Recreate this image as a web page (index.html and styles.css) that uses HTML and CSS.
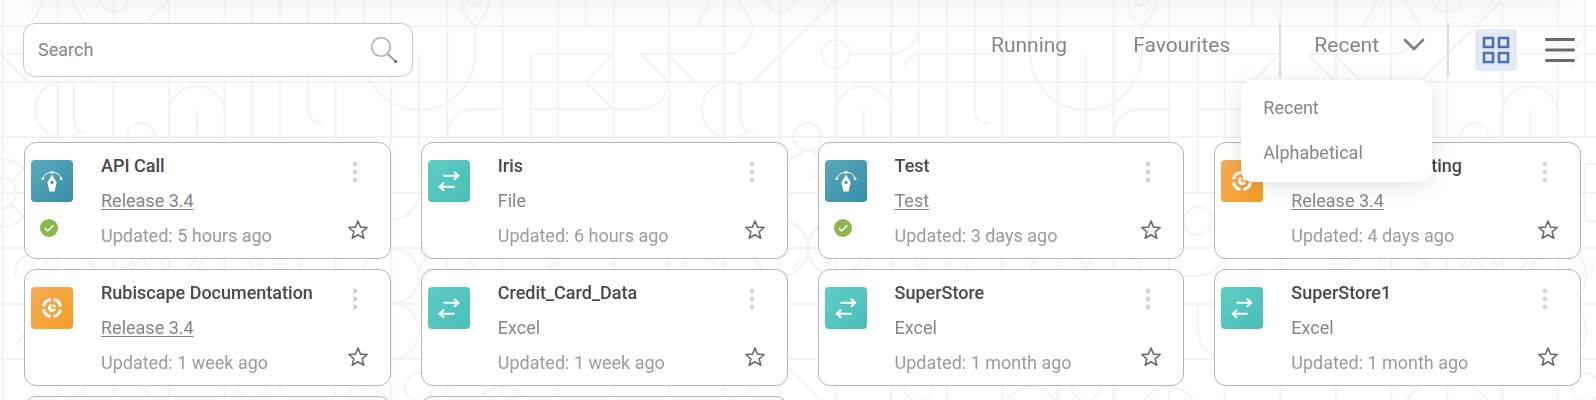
FILE: index.html
```html
<!DOCTYPE html>
<html lang="en">

<head>
    <title>Rubiscape</title>
    <meta charset="utf-8">
    <meta name="viewport" content="width=device-width, initial-scale=1.0">
    <link rel="stylesheet" href="styles.css">
</head>

<body>
    <svg class="backdrop" aria-hidden="true">
        <defs>
            <pattern id="lines" width="666.7" height="445" patternUnits="userSpaceOnUse">
                <g fill="none" stroke="#f3f3f3" stroke-width="2">
                    <path d="M0 26H667M0 82H667M0 137H667M0 193H667M0 248H667M0 304H667M0 359H667" />
                    <path d="M2.500 0V445M58 0V445M113.500 0V445M169 0V445M224.500 0V445M280 0V445M335.500 0V445M391 0V445M447 0V445M502.500 0V445M558 0V445M613.500 0V445" />
                    <path d="M252 0V137M308 0V109Q308 123 323 123M419 54V193M586 0V26M531 54V193" />
                    <path d="M44 0L30 26M72 0L86 26A28 28 0 0 1 58 54H0L28 82M641 54H667M641 54L669 82M86 82L169 0" />
                    <circle cx="113.500" cy="-2" r="14" />
                    <circle cx="169" cy="54" r="14" />
                    <path d="M183 54H225A28 28 0 0 0 252 26M238 68A14 14 0 0 1 252 54H335" />
                    <path d="M80 132A28 28 0 1 1 74 84V120Q75 132 86 132M169 109A28 28 0 0 1 224 109M197 109V137" />
                    <circle cx="141" cy="137" r="14" />
                    <path d="M363.500 0V54A55.600 55.600 0 0 0 475 54V26Q461 14 461 0M475 26Q489 14 489 0" />
                    <circle cx="475" cy="-2" r="7" />
                    <path d="M447 137Q449 109 475 109H502M613 54H531M531 109H641A27 27 0 0 0 668 82M613 54L586 82L613 109" />
                    <circle cx="0" cy="193" r="34" />
                    <circle cx="0" cy="193" r="16" />
                    <path d="M11 182L24 169M11 204L24 217M16 276A16 16 0 0 1 48 266M16 346L28 328M88 258L95 268M134 258L127 268M158 258L165 268M196 258L188 268M259 262V268M301 262V268" />
                    <path d="M419 193A28 28 0 0 1 391 220" />
                    <circle cx="391" cy="276" r="28" />
                    <circle cx="391" cy="331" r="28" />
                    <circle cx="419" cy="387" r="14" />
                    <circle cx="252" cy="387" r="14" />
                    <circle cx="113.500" cy="248" r="28" />
                    <circle cx="169" cy="248" r="28" />
                    <circle cx="225" cy="276" r="28" />
                    <circle cx="225" cy="331" r="28" />
                    <circle cx="531" cy="221" r="14" />
                    <circle cx="447" cy="276" r="28" />
                    <circle cx="364" cy="415" r="28" />
                    <circle cx="502" cy="415" r="28" />
                    <path d="M121 161L141 150L160 160M141 180L160 169M252 164H280M252 221H280M252 164V221M121 367L165 411M86 387L58 415M531 304V330Q532 352 558 359M502 276H531A28 28 0 0 0 558 248" />
                </g>
            </pattern>
            <linearGradient id="blue" x2="1" y2="1">
                <stop offset="0" stop-color="#5aa9bb" />
                <stop offset="1" stop-color="#378da9" />
            </linearGradient>
            <linearGradient id="teal" x2="1" y2="1">
                <stop offset="0" stop-color="#5fcdc6" />
                <stop offset="1" stop-color="#49beb7" />
            </linearGradient>
            <linearGradient id="orange" x2="1" y2="1">
                <stop offset="0" stop-color="#f3ac58" />
                <stop offset="1" stop-color="#f59d22" />
            </linearGradient>
            <symbol id="pen" viewBox="0 0 42 42">
                <rect width="42" height="42" rx="4" fill="url(#blue)" />
                <path d="M12 18.500Q13.500 12.500 21 12.300Q28.500 12.500 30 18.500" fill="none" stroke="#fff" stroke-width="1" />
                <circle cx="11.800" cy="18.800" r="1.300" fill="#fff" />
                <circle cx="30.200" cy="18.800" r="1.300" fill="#fff" />
                <path d="M19.700 11h2.600v2.600h-2.600z" fill="#fff" />
                <path d="M21 14.500L25.600 22.500L23.600 31.500H18.400L16.400 22.500Z" fill="#fff" />
                <circle cx="21" cy="22.400" r="1.700" fill="#4599b0" />
            </symbol>
            <symbol id="swap" viewBox="0 0 42 42">
                <rect width="42" height="42" rx="4" fill="url(#teal)" />
                <path d="M15.500 15.700H30M26 11.700L30.300 15.700L26 19.700M26.500 26.700H12M16 22.700L11.700 26.700L16 30.700" fill="none" stroke="#fff" stroke-width="2" />
            </symbol>
            <symbol id="wheel" viewBox="0 0 42 42">
                <rect width="42" height="42" rx="4" fill="url(#orange)" />
                <circle cx="21" cy="21" r="8.600" fill="none" stroke="#fff" stroke-width="3" stroke-dasharray="10.500 3" stroke-dashoffset="-1.500" />
                <path d="M20.300 17V21.700H25A4 4 0 1 1 20.300 17Z" fill="#fff" />
                <path d="M21.800 17A3.600 3.600 0 0 1 25 20.200H21.800Z" fill="#fff" />
            </symbol>
            <symbol id="check" viewBox="0 0 18 18">
                <circle cx="9" cy="9" r="9" fill="#8db74e" />
                <path d="M4.800 9.200L7.800 12L13.300 6.300" fill="none" stroke="#fff" stroke-width="1.500" />
            </symbol>
            <symbol id="dots" viewBox="0 0 6 22">
                <g fill="#d6d6d6">
                    <circle cx="3" cy="3" r="2.400" />
                    <circle cx="3" cy="11" r="2.400" />
                    <circle cx="3" cy="19" r="2.400" />
                </g>
            </symbol>
            <symbol id="star" viewBox="0 0 22 22">
                <path d="M11 2L13.500 8.100L20.200 8.500L15.100 12.800L16.800 19.300L11 15.700L5.200 19.300L6.900 12.800L1.800 8.500L8.500 8.100Z" fill="none" stroke="#6d6e72" stroke-width="1.600" stroke-linejoin="round" />
            </symbol>
        </defs>
        <rect width="100%" height="100%" fill="url(#lines)" />
    </svg>
    <div class="top-shadow"></div>

    <header class="toolbar">
        <form class="search">
            <input type="text" placeholder="Search" aria-label="Search">
            <button aria-label="Submit search">
                <svg width="28" height="28" viewBox="0 0 28 28">
                    <circle cx="11" cy="11" r="9.300" fill="none" stroke="#b5b5b5" stroke-width="1.800" />
                    <path d="M17.500 17.700L25 25" stroke="#a0a0a0" stroke-width="1.800" />
                    <circle cx="25.600" cy="25.600" r="1.700" fill="#6d6e72" />
                </svg>
            </button>
        </form>
        <nav class="filters">
            <a href="#running">Running</a>
            <a href="#favourites">Favourites</a>
        </nav>
        <div class="sort">
            <button class="sort-button" aria-expanded="true">Recent
                <svg width="22" height="14" viewBox="0 0 22 14">
                    <path d="M2 2L11 11L20 2" fill="none" stroke="#808186" stroke-width="2.800" stroke-linecap="round" />
                </svg>
            </button>
            <div class="sort-menu">
                <button>Recent</button>
                <button>Alphabetical</button>
            </div>
        </div>
        <div class="views">
            <button class="view selected" aria-label="Grid view">
                <svg width="28" height="28" viewBox="0 0 28 28">
                    <path d="M2 2H11V11H2ZM17 2H26V11H17ZM2 17H11V26H2ZM17 17H26V26H17Z" fill="none" stroke="#4a6fb8" stroke-width="2.600" />
                </svg>
            </button>
            <button class="view" aria-label="List view">
                <svg width="30" height="26" viewBox="0 0 30 26">
                    <path d="M1.500 2.500H28.500M1.500 13H28.500M1.500 23.500H28.500" stroke="#6a6b70" stroke-width="3" stroke-linecap="round" />
                </svg>
            </button>
        </div>
    </header>

    <main class="cards">
        <article class="card">
            <div class="kind"><svg class="icon"><use href="#pen" /></svg><svg class="status"><use href="#check" /></svg></div>
            <div class="info">
                <h2>API Call</h2>
                <a href="#release">Release 3.4</a>
                <p>Updated: 5 hours ago</p>
            </div>
            <div class="actions">
                <button class="more" aria-label="More"><svg width="6" height="22"><use href="#dots" /></svg></button>
                <button class="fav" aria-label="Favourite"><svg width="22" height="22"><use href="#star" /></svg></button>
            </div>
        </article>
        <article class="card">
            <div class="kind"><svg class="icon"><use href="#swap" /></svg></div>
            <div class="info">
                <h2>Iris</h2>
                <span>File</span>
                <p>Updated: 6 hours ago</p>
            </div>
            <div class="actions">
                <button class="more" aria-label="More"><svg width="6" height="22"><use href="#dots" /></svg></button>
                <button class="fav" aria-label="Favourite"><svg width="22" height="22"><use href="#star" /></svg></button>
            </div>
        </article>
        <article class="card">
            <div class="kind"><svg class="icon"><use href="#pen" /></svg><svg class="status"><use href="#check" /></svg></div>
            <div class="info">
                <h2>Test</h2>
                <a href="#test">Test</a>
                <p>Updated: 3 days ago</p>
            </div>
            <div class="actions">
                <button class="more" aria-label="More"><svg width="6" height="22"><use href="#dots" /></svg></button>
                <button class="fav" aria-label="Favourite"><svg width="22" height="22"><use href="#star" /></svg></button>
            </div>
        </article>
        <article class="card">
            <div class="kind"><svg class="icon"><use href="#wheel" /></svg></div>
            <div class="info">
                <h2>Rubiscape Budgeting</h2>
                <a href="#release">Release 3.4</a>
                <p>Updated: 4 days ago</p>
            </div>
            <div class="actions">
                <button class="more" aria-label="More"><svg width="6" height="22"><use href="#dots" /></svg></button>
                <button class="fav" aria-label="Favourite"><svg width="22" height="22"><use href="#star" /></svg></button>
            </div>
        </article>
        <article class="card">
            <div class="kind"><svg class="icon"><use href="#wheel" /></svg></div>
            <div class="info">
                <h2>Rubiscape Documentation</h2>
                <a href="#release">Release 3.4</a>
                <p>Updated: 1 week ago</p>
            </div>
            <div class="actions">
                <button class="more" aria-label="More"><svg width="6" height="22"><use href="#dots" /></svg></button>
                <button class="fav" aria-label="Favourite"><svg width="22" height="22"><use href="#star" /></svg></button>
            </div>
        </article>
        <article class="card">
            <div class="kind"><svg class="icon"><use href="#swap" /></svg></div>
            <div class="info">
                <h2>Credit_Card_Data</h2>
                <span>Excel</span>
                <p>Updated: 1 week ago</p>
            </div>
            <div class="actions">
                <button class="more" aria-label="More"><svg width="6" height="22"><use href="#dots" /></svg></button>
                <button class="fav" aria-label="Favourite"><svg width="22" height="22"><use href="#star" /></svg></button>
            </div>
        </article>
        <article class="card">
            <div class="kind"><svg class="icon"><use href="#swap" /></svg></div>
            <div class="info">
                <h2>SuperStore</h2>
                <span>Excel</span>
                <p>Updated: 1 month ago</p>
            </div>
            <div class="actions">
                <button class="more" aria-label="More"><svg width="6" height="22"><use href="#dots" /></svg></button>
                <button class="fav" aria-label="Favourite"><svg width="22" height="22"><use href="#star" /></svg></button>
            </div>
        </article>
        <article class="card">
            <div class="kind"><svg class="icon"><use href="#swap" /></svg></div>
            <div class="info">
                <h2>SuperStore1</h2>
                <span>Excel</span>
                <p>Updated: 1 month ago</p>
            </div>
            <div class="actions">
                <button class="more" aria-label="More"><svg width="6" height="22"><use href="#dots" /></svg></button>
                <button class="fav" aria-label="Favourite"><svg width="22" height="22"><use href="#star" /></svg></button>
            </div>
        </article>
        <article class="card"></article>
        <article class="card"></article>
    </main>
</body>

</html>
```
FILE: styles.css
```css
* {
    box-sizing: border-box;
}

body {
    margin: 0;
    height: 100vh;
    overflow: hidden;
    background-color: #fff;
    font-family: Roboto, "Liberation Sans", sans-serif;
    font-size: 18px;
    color: #85868a;
}

button {
    padding: 0;
    border: none;
    background: none;
    font: inherit;
    color: inherit;
    cursor: pointer;
}

a {
    color: inherit;
}

svg {
    display: block;
}

/* BACKGROUND */

.backdrop {
    position: fixed;
    top: 0;
    left: 0;
    z-index: -1;
    width: 100%;
    height: 100%;
}

.top-shadow {
    position: fixed;
    top: 0;
    left: 0;
    right: 0;
    z-index: -1;
    height: 24px;
    background: linear-gradient(rgba(220, 228, 226, 0.35), rgba(240, 240, 240, 0.1));
    mask-image: linear-gradient(to right, transparent, #000 50px, #000 calc(100% - 50px), transparent);
}

/* TOOLBAR */

.toolbar {
    display: flex;
    padding: 23px 21px 0 23px;
}

.search {
    display: flex;
    align-items: center;
    width: 390px;
    height: 54px;
    margin-right: auto;
    padding: 0 14px;
    border: 1px solid #c6c6c6;
    border-radius: 12px;
    background-color: #fff;
}

.search input {
    flex: 1;
    min-width: 0;
    padding: 0 0 2px;
    border: none;
    outline: none;
    background: none;
    font: inherit;
}

.search input::placeholder {
    color: #85868a;
}

.filters {
    display: flex;
    gap: 66px;
    margin-right: 49px;
    font-size: 21px;
    line-height: 44px;
}

.filters a {
    text-decoration: none;
}

.sort {
    position: relative;
    height: 54px;
    padding: 0 22px 0 33px;
    border-left: 2px solid #dcdee2;
    border-right: 2px solid #dcdee2;
}

.sort-button {
    display: flex;
    align-items: center;
    gap: 24px;
    font-size: 21px;
    line-height: 44px;
}

.sort-menu {
    position: absolute;
    top: 57px;
    left: -40px;
    z-index: 1;
    display: flex;
    flex-direction: column;
    width: 191px;
    padding: 5px 0 7px;
    border-radius: 12px;
    background-color: #fff;
    box-shadow: 0 3px 20px rgba(0, 0, 0, 0.12);
}

.sort-menu button {
    padding: 0 22px;
    line-height: 45px;
    text-align: left;
}

.views {
    display: flex;
    align-items: center;
    gap: 28px;
    margin-left: 26px;
}

.view.selected {
    padding: 7px;
    border-radius: 3px;
    background-color: #e3eaf5;
}

/* CARDS */

.cards {
    display: grid;
    grid-template-columns: repeat(4, 1fr);
    gap: 10px 30px;
    padding: 65px 15px 0 24px;
}

.card {
    display: flex;
    min-height: 117px;
    padding: 5px 21px 5px 6px;
    border: 1px solid #b4b4b4;
    border-radius: 12px;
    background-color: #fff;
}

.kind {
    display: flex;
    flex-direction: column;
    gap: 17px;
    width: 70px;
    padding-top: 12px;
}

.icon {
    width: 42px;
    height: 42px;
}

.status {
    width: 18px;
    height: 18px;
    margin-left: 9px;
}

.info {
    flex: 1;
    line-height: 35px;
}

.info h2 {
    margin: 0;
    font-size: 18px;
    font-weight: 500;
    color: #48494d;
}

.info a,
.info span {
    display: block;
    width: fit-content;
}

.info a {
    text-underline-offset: 2px;
}

.info p {
    margin: 0;
    color: #9c9c9f;
}

.actions {
    display: flex;
    flex-direction: column;
    justify-content: space-between;
    align-items: center;
    padding: 13px 0 12px;
}

.more {
    margin-right: 6px;
}
```
